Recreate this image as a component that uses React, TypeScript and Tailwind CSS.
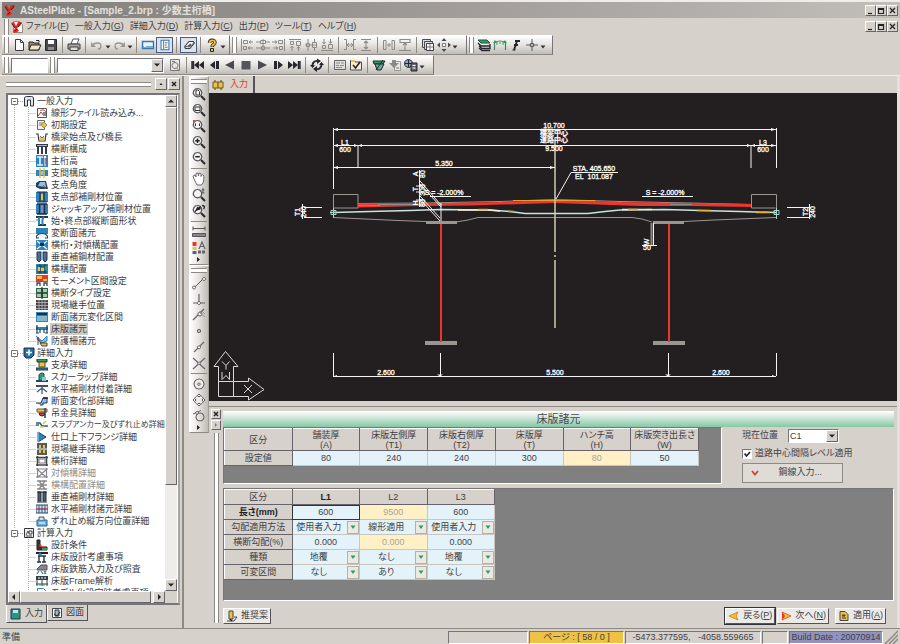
import { useState } from 'react'
import clsx from 'clsx'

// [path, fill, stroke, stroke width]
type Shape = [string, string, string?, number?]

const K = '#26262c'
const B = '#2f83bd'
const L = '#8cc4e6'
const Y = '#f0c23c'
const R = '#e23b2e'
const G = '#2f9e5a'
const D = '#8d8a86'
const N = 'none'

function Glyph({ shapes, size = 16, className }: { shapes: Shape[]; size?: number; className?: string }) {
  return (
    <svg viewBox={`0 0 ${size} ${size}`} width={size} height={size} className={clsx('shrink-0', className)} aria-hidden="true">
      {shapes.map(([d, fill, stroke, width], i) => (
        <path key={i} d={d} fill={fill} stroke={stroke ?? 'none'} strokeWidth={width ?? 1} />
      ))}
    </svg>
  )
}

/* ---------- toolbar glyphs (16 x 16) ---------- */
const lens: Shape[] = [
  ['M6.5 2.5a4.2 4.2 0 1 0 .01 0z', '#f4f4f2', '#55555a', 1.2],
  ['M10 10l4 4', N, K, 2],
]
const icons: Record<string, Shape[]> = {
  new: [['M4.5 2.5h5l3 3v8h-8z', '#fff', '#3c3c42'], ['M9.5 2.5v3h3', N, '#3c3c42']],
  open: [['M2 5h4l1 1h5v7H2z', '#9b8c62', K], ['M4 8h10l-2.500 5H2z', '#f1e6c0', K], ['M9 3.500h3v2', N, K]],
  save: [['M2.5 2.500h11v11h-11z', '#4a4a4e', K], ['M5 3h6v4H5z', '#fff'], ['M5 10h6v3H5z', '#8d8d90']],
  print: [['M5 7l2-5h6l-2 5z', '#fff', '#55555a'], ['M2 7h12v5H2z', '#a8a8a6', '#3e3e44'], ['M4 10h8v3.500H4z', '#dcdcda', '#3e3e44']],
  undo: [['M3 9c2-4 9-4 9 0c0 2-1 3-3 3', N, '#9a9894', 1.300], ['M2 5v5h5z', '#9a9894']],
  redo: [['M13 9c-2-4-9-4-9 0c0 2 1 3 3 3', N, '#9a9894', 1.300], ['M14 5v5H9z', '#9a9894']],
  bar: [['M2.500 4.500h11v7h-11z', '#e8f3fa', '#3278b4', 1.400], ['M3 9h10v2H3z', '#6eaedb'], ['M4 9.500h2', N, '#fff']],
  panel: [['M3.500 2.500h9v11h-9z', '#fff', '#3278b4', 1.200], ['M6.500 3v10M8 5.500h3M8 8h2M8 10.500h3', N, '#555']],
  eraser: [['M3 10l5-6h5l1 2-5 6H4z', '#fff', '#3e3e44', 1.200], ['M3 10h6l5-5', N, '#3e3e44'], ['M6 9a2 2 0 1 0 4-3z', '#55555a']],
  help: [['M5.500 6c0-3.500 5.500-3.500 5.500-.500c0 2-3 2-3 4.500', N, K, 3.400], ['M5.500 6c0-3.500 5.500-3.500 5.500-.500c0 2-3 2-3 4', N, Y, 1.800], ['M6.500 11.500h3v3h-3z', Y, K]],
  alignL: [['M2.500 2v12', N, D], ['M4.500 3.500h4v3h-4zM4.500 9.500h3v3h-3z', N, D], ['M10 5h4M9 11h5M12 3.500l-2 1.500 2 1.500M11 9.500L9 11l2 1.500', N, D]],
  alignC: [['M8 2v12', N, D], ['M5.500 3.500h5v3h-5zM6.500 9.500h3v3h-3z', N, D], ['M1 5h4M11 5h4M1 11h5M10 11h5', N, D]],
  alignR: [['M13.500 2v12', N, D], ['M7.500 3.500h4v3h-4zM8.500 9.500h3v3h-3z', N, D], ['M1 5h5M2 11h5M4 3.500L6 5 4 6.500M5 9.500L7 11l-2 1.500', N, D]],
  alignT: [['M2 2.500h12', N, D], ['M3.500 4.500h3v3h-3zM9.500 4.500h4v4h-4z', N, D], ['M5 9v5M11.500 10v4M3.500 11L5 9l1.500 2M10 11.500l1.500-2 1.500 2', N, D]],
  alignM: [['M2 8h12', N, D], ['M3.500 6.500h3v3h-3zM9.500 5.500h4v5h-4z', N, D], ['M5 2v4M11.500 2v3M5 10v4M11.500 11v3', N, D]],
  alignB: [['M2 13.500h12', N, D], ['M3.500 8.500h3v3h-3zM9.500 7.500h4v4h-4z', N, D], ['M5 2v5M11.500 2v4M3.500 5L5 7l1.500-2M10 4.500l1.500 2 1.500-2', N, D]],
  spanH: [['M2 2.500h2.500v10H2M14 2.500h-2.500v10H14M5 8h6M7 6L5 8l2 2M9 6l2 2-2 2', N, D]],
  spanV: [['M3 2.500h10M3 13.500h10M8 4v8M6 6l2-2 2 2M6 10l2 2 2-2', N, D, 1.100]],
  gapH: [['M2.500 3.500h2.500v9H2.500zM11 3.500h2.500v9H11z', N, D], ['M8 6v4M6 8h4', N, D]],
  gapV: [['M3 2.500h10v3H3zM2 13.500h12M8 6v7M6 8l2-2 2 2', N, D, 1.100]],
  copies: [['M2.500 2.500h8v8h-8z', '#ddd', '#4a4a4e'], ['M4.500 4.500h8v8h-8z', '#ddd', '#4a4a4e'], ['M6.500 6.500h7v7h-7z', '#fff', '#3e3e44'], ['M10 7v6M7 10h6', N, '#777']],
  move: [['M8 1l2.500 3h-5zM8 15l2.500-3h-5zM1 8l3-2.500v5zM15 8l-3-2.500v5z', '#4a4a4e'], ['M6.500 6.500h3v3h-3z', '#fff', '#777']],
  layers: [['M2 3h9l3 3H5z', '#2f9e6c', '#175a3c'], ['M2 6l3 3h9v-2M3 9l3 2.500h8v-2M3 11l3 2.500h8', N, K, 1.300]],
  frame: [['M2.500 13V5.500c3-2 8-2 11 0V13', N, '#4f8068', 1.200], ['M5 5v3M8 5v2M11 5v3', N, G], ['M1 6l2-3 2 3zM11 6l2-3 2 3z', G]],
  force: [['M6 13l3-9M7 4h5M6 8h4', N, K, 1.900], ['M4.500 13h3', N, K]],
  cross: [['M8 2v12M2 8h12', N, '#55555a'], ['M6.500 6.500h3v3h-3z', '#bbb', '#55555a']],
  sheet: [['M3.500 2.500h9v11h-9z', '#e8e6e2', '#77757a'], ['M8 5.500a3 3 0 1 0 .01 0z', N, '#77757a'], ['M5 4.500h3M9.500 11l2 2', N, '#77757a']],
  first: [['M2 4v8M3.500 4v8', N, K, 1.400], ['M9 4v8L4 8zM14 4v8L9 8z', K]],
  prev: [['M9 4v8L4 8z', K], ['M11.500 4v8', N, K, 3]],
  back: [['M12 3.500v9L3 8z', '#4a4a50']],
  stop: [['M3.500 4h9v8.500h-9z', '#55555c']],
  play: [['M4 3.500v9L13 8z', '#4a4a50']],
  next: [['M8 4v8l5-4z', K], ['M5.500 4v8', N, K, 3]],
  last: [['M14 4v8M12.500 4v8', N, K, 1.400], ['M2 4v8l5-4zM7 4v8l5-4z', K]],
  refresh: [['M4 10a4.300 4.300 0 0 1 5-6M12 6a4.300 4.300 0 0 1-5 6', N, K, 1.800], ['M8 1.500l4 2.500-4 3zM8 9v6l-4-3zM1 8h5L3.500 11zM15 8h-5l2.500-3z', K]],
  grid: [['M2.500 3.500h11v9h-11z', '#e0deda', '#66646a'], ['M4 6h4M9 6h3M4 8.500h3M8 8.500h4M4 10.500h6', N, '#8d8a90']],
  check: [['M2.500 3.500h4l1 1.500h6v8h-11z', '#f4eccc', '#4a4a50'], ['M5 8l2.500 3L12 5', N, K, 1.600], ['M3 3h4v2H3z', Y]],
  design: [['M2 4h12l-2 3H3z', '#2f9e6c', K], ['M4 7l2 6h4l3-6z', '#5fae94', K], ['M5 13l7-10', N, K]],
  report: [['M7.500 4.500h6v9h-6z', '#e8e6e2', '#999'], ['M2 6h3V3h4v3h3L7 11z', '#8d8a86'], ['M9 11h3', N, '#777']],
  world: [['M5.500 2.500a4 4 0 1 0 .01 0z', '#8fa9bd', K], ['M2 6.500h7M5.500 3v7', N, K], ['M8 6h6v8H8z', '#66646a', K], ['M9.500 8.500h3M9.500 11h3', N, '#fff']],
  zoomPage: [...lens, ['M5 4h2l1.500 1.500V9H5z', '#fff', '#333']],
  zoomWin: [...lens, ['M4 5h5v3.500H4z', N, '#333']],
  zoomFit: [...lens, ['M4.500 5.500v2.500M8.500 5.500v2.500', N, '#333'], ['M2 2l2.500 0L2 4.500z', R]],
  zoomIn: [...lens, ['M6.500 4.500v4.500M4.200 6.700h4.600', N, '#222', 1.500]],
  zoomOut: [...lens, ['M4.200 6.700h4.600', N, '#222', 1.500]],
  hand: [['M3 8L2 5l2-1 1 2V2.500l2-.500.500 3L8 2l2 .500v3l1.500-2L13 5l-.500 6-2 3H6z', '#fff', '#6a686c']],
  zoomDyn: [...lens, ['M12 1v5M10.500 3h3M10.500 6h3', N, '#55555a']],
  zoomPrev: [...lens, ['M4 9l3-5M5 7l4-1v-2zM11 2.500c3 0 3 2 1.500 3.500', N, '#222', 1.300]],
  measure: [['M2 4.500h12M2 2.500v4M14 2.500v4', N, '#55555a'], ['M1.500 9.500h13v3h-13z', '#88868a', '#55555a']],
  attrs: [['M1.500 2h4v4h-4z', R], ['M1.500 7h4v3h-4z', Y], ['M1.500 11h4v3h-4z', '#5060a8'], ['M8 9l3-7 3 7M9 6.500h4', N, '#66646a', 1.200], ['M7 10.500h3v3H7zM11 10.500h3v3h-3z', '#66646a']],
  snapEnd: [['M4 12l8-8', N, '#55555a'], ['M3 11a1.500 1.500 0 1 0 .01 0zM13 2.500a1.500 1.500 0 1 0 .01 0z', '#fff', '#55555a']],
  snapPerp: [['M2 12h12M8 3v9', N, '#66646a', 1.200], ['M8 10.500a1.500 1.500 0 1 0 .01 0z', '#fff', '#55555a']],
  snapTan: [['M2 13L13 2', N, '#66646a', 1.200], ['M9 5a2 2 0 1 0 .01 0z', '#fff', '#55555a'], ['M9 6l5 4M11 4l3 3', N, '#999']],
  snapPoint: [['M8 6.500a1.500 1.500 0 1 0 .01 0z', '#fff', '#55555a', 1.200]],
  snapMid: [['M3 13L13 3', N, '#66646a', 1.100], ['M8 6.800a1.500 1.500 0 1 0 .01 0z', '#fff', '#55555a']],
  snapX: [['M2 3l12 11M14 3L2 14', N, '#66646a', 1.200], ['M8 7a1.200 1.200 0 1 0 .01 0z', '#fff', '#66646a']],
  snapCen: [['M8 3a5 5 0 1 0 .01 0z', '#eceae6', '#66646a', 1.100], ['M8 7a1.200 1.200 0 1 0 .01 0z', N, '#55555a']],
  snapQuad: [['M8 3.500a4.500 4.500 0 1 0 .01 0z', '#eceae6', '#66646a'], ['M8 2l1.500 1.500L8 5 6.500 3.500zM8 11l1.500 1.500L8 14l-1.500-1.500zM2 8l1.500-1.500L5 8 3.500 9.500zM11 8l1.500-1.500L14 8l-1.500 1.500z', '#fff', '#55555a']],
  snapArc: [['M9 5a4 4 0 1 0 .01 0z', N, '#66646a', 1.100], ['M2 6L10 2.500', N, '#66646a'], ['M6 3.500a1.300 1.300 0 1 0 .01 0z', '#fff', '#55555a']],
}

/* ---------- tree glyphs (12 x 12) ---------- */
const treeIcons: Record<string, Shape[]> = {
  arch: [['M1.500 11V3a2 2 0 0 1 2-1.500h5a2 2 0 0 1 2 1.500v8h-3V5h-3v6z', '#dfe6ec', '#33333a']],
  star: [['M1 1h10v7l-3 3H3l-2-2z', '#2a6f9e', '#1d2c40'], ['M6 2.500v6M3 5.500h6', N, '#dff', 1.600]],
  doc: [['M1.500 1.500h9v9h-9z', '#eee', '#33333a'], ['M3 8l2-4 1 2M6 4h3v3H6zM3 9h6', N, '#44444c']],
  line: [['M1.500 1.500h9v9h-9z', '#fff', '#555'], ['M2 9l3-4 3 4M4 4c2-2 5-1 6 1', N, '#a03c2c'], ['M7 5h3v4H7z', '#889']],
  init: [['M1.500 1.500h7v9h-7z', '#f2f2f2', '#666'], ['M3 4h4M3 6h3', N, '#777'], ['M8 3l3 3-3 3-3-3z', Y, '#a08a4c']],
  girder: [['M0 3h2l1 7h6l1-7h2', N, '#33384a', 1.200], ['M3.500 9.500h5V6h-5z', Y], ['M4 5l2 2 2-2', N, '#66a']],
  cols: [['M0 1h12v3H0z', '#33384a'], ['M2 4v7M6 4v7M10 4v7', N, '#33384a', 2], ['M1 2.500h10', N, L]],
  height: [['M0 0h12v12H0z', B], ['M1 2h6M1 10h6M4 2v8', N, '#e4f0f8', 1.700], ['M9 1v10M8 3l1-2 1 2', N, '#fff'], ['M10 3v6', N, R]],
  span: [['M0 3h12v6H0z', B], ['M4 1v10M8 1v10', N, Y, 1.400], ['M5 4h2v4H5z', L]],
  angle: [['M0 8V4l3-2h7l2 8H4z', '#24405e'], ['M2 7l2-4h5l1 5z', L], ['M7 6l3 4', N, R]],
  stiff: [['M0 1h12v10H0z', B], ['M1 1h10M1 11h10M4 1v10M8 1v10', N, '#1d2c40', 1.200], ['M5 3h2v6H5z', Y]],
  jack: [['M0 1h12v10H0z', B], ['M1 1h10M1 11h10M3.500 1v10M8.500 1v10', N, '#1d2c40', 1.300], ['M5 2h2v8H5z', '#9080b8']],
  ends: [['M0 2h12M2 10h8', N, '#1d3c40', 2], ['M3 2v8M8 2c-2 2-2 5-1 8', N, B, 2], ['M0 5h2', N, G]],
  vary: [['M0 1h12v6H0z', B], ['M0 11c1-6 11-6 12 0M0 11h3M9 11h3', '#e8f4fa', '#26405a', 1.200]],
  brace: [['M0 1h12v10H0z', B], ['M1 2l10 8M11 2L1 10', N, '#e4f0f8', 1.400], ['M4 4h4v3H4z', '#17314c']],
  vstiff: [['M1 1h4v8l-2 2-2-2zM7 1h4v8l-2 2-2-2z', '#4d6c96', '#26304a'], ['M6 0v9', N, L]],
  lateral: [['M0 1h12v10H0z', B], ['M1 3h10M1 9h10M4 1v10M9 1v10', N, '#17404a'], ['M2 4h2v4H2zM5 5h3v3H5z', Y], ['M9 3h2v4H9z', G]],
  moment: [['M0 0h12v7H0z', R], ['M1 1h5v3H1z', Y], ['M7 4h4v2H7z', Y], ['M1 11V8h3v3M8 11V8h3v3', N, '#345', 1.300]],
  type: [['M0 1h12v10H0z', '#35604e'], ['M1 2h4v3H1zM1 7h4v3H1zM7 2h4v3H7zM7 7h4v3H7z', '#9fd0a4'], ['M6 0v12', N, K]],
  joint: [['M0 1h12v10H0z', '#44444c'], ['M0 3.500h12M0 6.500h12M0 9.500h12M3 1v10M6 1v10M9 1v10', N, '#c6c6cc', 0.700]],
  section: [['M0 1h12v10H0z', B], ['M1 2h10v2H1z', '#17314c'], ['M2 5v5M4 5v5M6 5v5M8 5v5M10 5v5', N, '#d8f0dc']],
  slab: [['M0 3l2 1h8l2-1v4H0z', B], ['M1 2v8M11 2v8M4 6v4M8 6v4M0 10h3M9 10h3', N, '#234064', 1.200]],
  rail: [['M0 1l6 5 5-5v5L6 8z', '#7ec0e4', B], ['M1 3l4 5', N, R, 1.500], ['M4 8h7v3H6z', Y, '#345'], ['M2 2v8', N, '#246']],
  bearing: [['M1 0h10v3H1z', G, '#234'], ['M3 3h6v5H3z', Y, '#543'], ['M0 9h12v2H0z', B, '#234']],
  scallop: [['M3 10V4a3 3 0 0 1 5-1v7z', G, '#246'], ['M0 10h12', N, '#246', 2], ['M6 6h4v4H6z', L]],
  hstiff: [['M0 3h12', N, '#33384a', 1.800], ['M6 3v8M6 5l-5 4M6 5l5 4', N, '#445a78', 1.300]],
  change: [['M0 8h5l2-5h4v5H7v2H4', L, '#26304a'], ['M7 3h5', N, '#222', 1.500]],
  hanger: [['M1 2h10v3H1z', Y, '#654'], ['M3 6a3 3 0 1 0 6 0z', R, '#422'], ['M9 1v10', N, '#246', 1.500]],
  anchor: [['M0 4h4l2 3h6M0 6h3', N, '#26608a', 1.600], ['M7 5l3-3M4 8h4', N, Y, 1.500]],
  flange: [['M2 1l8 5-8 5z', B, '#26405a'], ['M2 1v10', N, '#7ec0e4', 1.500]],
  fieldj: [['M1 0h10v12H1z', '#555a60'], ['M3 2h2v3H3zM7 2h2v3H7zM3 7h2v3H3zM7 7h2v3H7z', Y], ['M1 6h10', N, '#fff']],
  cross: [['M1.500 1v10M10.500 1v10M0 2.500h12M0 10h12', N, '#44444c', 1.600], ['M3 4h6v4H3z', '#fff', '#777']],
  sway: [['M1.500 1v10M10.500 1v10M0 2h12M0 10h12M2 3l8 7M10 3l-8 7', N, '#88868a', 1.200]],
  lat2: [['M1 2h10M1 6h10M1 10h10M3 2l6 8M9 2L3 10', N, '#88868a', 1.300]],
  pillars: [['M2 1h3v9H2zM7 1h3v9H7z', '#4a5a70', '#26303c'], ['M1 1h10M1 11h10', N, '#222']],
  hs2: [['M0 2h12v8H0z', '#c8e4f4', '#26405a'], ['M0 6h12', N, R, 1.600], ['M3 2v8M6 2v8M9 2v8', N, '#26608a']],
  stud: [['M1 5h10v6H1z', '#6ab2e0', '#26608a'], ['M3 5V2h5v3', '#cde', '#555'], ['M3 8h6', N, '#fff']],
  cond: [['M1 1h3v7h7v3H1z', '#33333a', '#222'], ['M4 8V5l2 3h4', R, R], ['M6 9h5v2H6z', G]],
  consider: [['M0 2h12', N, '#222', 2], ['M2 5h8M3 5v6M8 5v6M1 11h4M6 11h4', N, '#26303c', 1.400], ['M2 4l2-3 2 3z', B]],
  rebar: [['M1 6l4-4h6v5H1z', '#88868a', '#555'], ['M3 8l-2 3M5 8l2 3M8 8l2 3M10 8l-2 3', N, B, 1.200]],
  frame: [['M0 1h12v4H0z', '#33404a'], ['M2 3h2M5 3h2M8 3h2', N, '#fff'], ['M1 5v6M6 5v6M11 5v6M0 9h12', N, '#33404a'], ['M3 10h2M7 10h2', N, G]],
  model: [['M1.500 1.500h6l3 3v7h-9z', '#fff', B], ['M4 8l3-4 2 5', N, B]],
}

const tree = [
  {
    icon: 'arch',
    label: '一般入力',
    items: [
      ['line', '線形ファイル読み込み...'],
      ['init', '初期設定'],
      ['girder', '橋梁始点及び橋長'],
      ['cols', '横断構成'],
      ['height', '主桁高'],
      ['span', '支間構成'],
      ['angle', '支点角度'],
      ['stiff', '支点部補剛材位置'],
      ['jack', 'ジャッキアップ補剛材位置'],
      ['ends', '始・終点部縦断面形状'],
      ['vary', '変断面諸元'],
      ['brace', '横桁・対傾構配置'],
      ['vstiff', '垂直補鋼材配置'],
      ['lateral', '横構配置'],
      ['moment', 'モーメント区間設定'],
      ['type', '横断タイプ設定'],
      ['joint', '現場継手位置'],
      ['section', '断面諸元変化区間'],
      ['slab', '床版諸元'],
      ['rail', '防護柵諸元'],
    ],
  },
  {
    icon: 'star',
    label: '詳細入力',
    items: [
      ['bearing', '支承詳細'],
      ['scallop', 'スカーラップ詳細'],
      ['hstiff', '水平補剛材付着詳細'],
      ['change', '断面変化部詳細'],
      ['hanger', '吊金具詳細'],
      ['anchor', 'スラブアンカー及びずれ止め詳細'],
      ['flange', '仕口上下フランジ詳細'],
      ['fieldj', '現場継手詳細'],
      ['cross', '横桁詳細'],
      ['sway', '対傾構詳細'],
      ['lat2', '横構配置詳細'],
      ['pillars', '垂直補剛材詳細'],
      ['hs2', '水平補剛材諸元詳細'],
      ['stud', 'ずれ止め縦方向位置詳細'],
    ],
  },
  {
    icon: 'doc',
    label: '計算入力',
    items: [
      ['cond', '設計条件'],
      ['consider', '床版設計考慮事項'],
      ['rebar', '床版鉄筋入力及び照査'],
      ['frame', '床版Frame解析'],
      ['model', 'モデル化設定時考慮事項'],
    ],
  },
]
const disabledItems = ['対傾構詳細', '横構配置詳細']

const raised = 'border border-t-white border-l-white border-r-[#66646a] border-b-[#66646a] bg-[#d6d1ca]'
const sunken = 'border border-t-[#77757a] border-l-[#77757a] border-r-white border-b-white'

function Grip({ vertical = false }: { vertical?: boolean }) {
  return vertical ? (
    <span className="mx-auto my-[2px] block h-[5px] w-4 shrink-0 border-y border-[#8d8a86] bg-white" />
  ) : (
    <span className="mx-[2px] block h-4 w-[5px] shrink-0 self-center border-x border-[#8d8a86] bg-white" />
  )
}

const Sep = () => <span className="mx-[3px] h-4 w-px shrink-0 self-center bg-[#8d8a86]" />

function Caret() {
  return (
    <svg viewBox="0 0 6 6" width="6" height="6" className="mt-1 shrink-0" aria-hidden="true">
      <path d="M0.500 1.500h5L3 4.500z" fill="#33333a" />
    </svg>
  )
}

// "|" is a separator, "v" a drop-down caret, "*" marks a pressed button
function Tools({ names }: { names: string[] }) {
  return (
    <>
      {names.map((n, i) => {
        if (n === '|') return <Sep key={i} />
        if (n === 'v') return <Caret key={i} />
        const pressed = n.endsWith('*')
        const name = n.replace('*', '')
        return (
          <button
            key={i}
            aria-label={name}
            className={clsx('flex h-4 shrink-0 items-center justify-center', pressed ? 'w-[17px] border border-[#4b5b80] bg-[#dde3ea]' : 'w-4')}
          >
            <Glyph shapes={icons[name]} className={pressed ? 'size-[14px]' : undefined} />
          </button>
        )
      })}
    </>
  )
}

const bandClass = 'flex h-5 shrink-0 items-center border-t border-r border-b border-t-white border-r-[#77757a] border-b-[#8d8a86] bg-linear-to-b from-white via-[#e6e3df] to-[#bfbbb6]'

function WindowButtons() {
  const marks = ['M2 7.500h4', 'M1.500 2.500h5v5h-5zM1.500 3.500h5', 'M2 2l5 5M7 2L2 7']
  return (
    <div className="ml-auto flex shrink-0">
      {['最小化', '元に戻す', '閉じる'].map((label, i) => (
        <button key={label} aria-label={label} className={clsx('flex h-[11px] w-[11px] items-center justify-center', raised)}>
          <svg viewBox="0 0 9 9" width="9" height="9" aria-hidden="true">
            <path d={marks[i]} fill="none" stroke="#222" strokeWidth="1.200" />
          </svg>
        </button>
      ))}
    </div>
  )
}

function AppMark({ page = false }: { page?: boolean }) {
  return (
    <svg viewBox="0 0 12 12" width="12" height="12" className="shrink-0" aria-hidden="true">
      {page && <path d="M2.500 0.500h6l3 3v8h-9z" fill="#fff" stroke="#8d8a86" />}
      <path d="M0 2l3-1 2 4 2-4h4l-2 4-3 2 2 3-4 2-2-1 2-4z" fill="#dc2a22" />
      <path d="M1 3l3 4M7 6l3-4M4 10l2-2" stroke="#5a1414" />
    </svg>
  )
}

const menus = [
  ['ファイル', 'F'],
  ['一般入力', 'G'],
  ['詳細入力', 'D'],
  ['計算入力', 'C'],
  ['出力', 'P'],
  ['ツール', 'T'],
  ['ヘルプ', 'H'],
]

function ArrowButton({ path, label, className }: { path: string; label: string; className?: string }) {
  return (
    <button aria-label={label} className={clsx('flex size-3 shrink-0 items-center justify-center', raised, className)}>
      <svg viewBox="0 0 8 8" width="8" height="8" aria-hidden="true">
        <path d={path} fill="#222" />
      </svg>
    </button>
  )
}

function TreeItem({ icon, label, last, lastGroup, selected, onSelect }: {
  icon: string
  label: string
  last: boolean
  lastGroup: boolean
  selected: boolean
  onSelect: () => void
}) {
  return (
    <li className="flex h-3 items-center whitespace-nowrap">
      <svg viewBox="0 0 27 12" width="27" height="12" className="shrink-0" aria-hidden="true">
        <path
          d={`${lastGroup ? '' : 'M5.500 0v12'}M19.500 0v${last ? 6 : 12}M19.500 6.500h8`}
          stroke="#aaa8a4"
          strokeDasharray="1 1"
        />
      </svg>
      <Glyph shapes={treeIcons[icon]} size={12} />
      <button
        onClick={onSelect}
        className={clsx(
          'ml-[2px] h-3 px-px leading-3',
          selected && 'bg-[#d0ccc5]',
          disabledItems.includes(label) && 'text-[#8d8a86]',
          label.length > 14 && 'text-[8px]',
        )}
      >
        {label}
      </button>
    </li>
  )
}

function Sidebar() {
  const [selected, setSelected] = useState('床版諸元')
  return (
    <aside className="flex w-[182px] shrink-0 flex-col pr-[2px] pl-[6px]">
      <div className="flex h-[17px] shrink-0 items-center gap-px pb-px">
        <span className="h-[5px] flex-1 border-y border-[#8d8a86] bg-white" />
        <ArrowButton label="折りたたむ" path="M4 3l1.500 2h-3z" className="ml-[3px]" />
        <button aria-label="閉じる" className={clsx('flex size-3 items-center justify-center', raised)}>
          <svg viewBox="0 0 8 8" width="8" height="8" aria-hidden="true">
            <path d="M2 2l4 4M6 2L2 6" stroke="#222" strokeWidth="1.400" />
          </svg>
        </button>
      </div>
      <div className="flex min-h-0 flex-1 border-2 border-[#77757a] border-r-[#a8a49f] bg-white pr-px">
        <div className="flex min-w-0 flex-1 flex-col">
          <ul className="min-h-0 flex-1 overflow-hidden pl-px text-[#3c3c44]">
            {tree.map((group, g) => (
              <li key={group.label}>
                <div className="flex h-3 items-center whitespace-nowrap">
                  <svg viewBox="0 0 14 12" width="14" height="12" className="shrink-0" aria-hidden="true">
                    <path d={`${g === 0 ? '' : 'M5.500 0v2'}M5.500 10v2M9 6.500h5`} stroke="#aaa8a4" strokeDasharray="1 1" />
                    <path d="M2.500 3.500h6v6h-6zM4 6.500h3" fill="white" stroke="#77757a" />
                  </svg>
                  <Glyph shapes={treeIcons[group.icon]} size={12} />
                  <span className="ml-[2px] leading-3">{group.label}</span>
                </div>
                <ul>
                  {group.items.map(([icon, label], i) => (
                    <TreeItem
                      key={label}
                      icon={icon}
                      label={label}
                      last={i === group.items.length - 1 && g < 2}
                      lastGroup={g === 2}
                      selected={selected === label}
                      onSelect={() => setSelected(label)}
                    />
                  ))}
                </ul>
              </li>
            ))}
          </ul>
          <div className="flex h-3 shrink-0 bg-[#ece9e5]">
            <ArrowButton label="左へ" path="M5 1v6L2 4z" />
            <span className={clsx('flex-1', raised)} />
            <span className="w-[2px]" />
            <ArrowButton label="右へ" path="M3 1v6l3-3z" />
          </div>
        </div>
        <div className="flex w-3 shrink-0 flex-col bg-[#efedea]">
          <ArrowButton label="上へ" path="M1 5.500h6L4 2.500z" />
          <span className={clsx('flex-4', raised)} />
          <span className="flex-1" />
          <ArrowButton label="下へ" path="M1 2.500h6L4 5.500z" />
          <span className="h-3 bg-[#d6d1ca]" />
        </div>
      </div>
      <div className="flex shrink-0 items-start pb-[5px]">
        <button className="flex h-[18px] items-center gap-[3px] border border-t-0 border-l-white border-r-[#55535a] border-b-[#55535a] px-[3px]">
          <Glyph shapes={[['M1 1h9v10H1z', '#2f8f96', '#17404a'], ['M3 2h5v3H3z', '#bfe6e0'], ['M4 9l4-4 2 1-3 4z', G]]} size={12} />
          入力
        </button>
        <button className="flex h-4 items-center gap-[3px] border border-t-0 border-l-white border-r-[#55535a] border-b-[#55535a] px-[3px]">
          <Glyph shapes={[['M1.500 1.500h9v9h-9z', '#fff', '#44444c'], ['M4 3h4v6H4z', '#9bb', '#335'], ['M3 7l3 2 3-4', N, '#222']]} size={12} />
          図面
        </button>
      </div>
    </aside>
  )
}

const HSep = () => <span className="mx-auto my-[2px] h-px w-4 shrink-0 bg-[#8d8a86]" />

function SideTools() {
  const group = (names: string[]) => (
    <div className="flex flex-col items-center border border-t-white border-l-white border-r-[#a09d98] border-b-[#8d8a86] bg-linear-to-r from-white via-[#e6e3df] to-[#bfbbb6]">
      <Grip vertical />
      {names.map((n, i) =>
        n === '|' ? (
          <HSep key={i} />
        ) : (
          <button key={i} aria-label={n} className="h-4 w-4">
            <Glyph shapes={icons[n]} />
          </button>
        ),
      )}
      <svg viewBox="0 0 8 8" width="8" height="8" aria-hidden="true">
        <path d="M2 1v5l3-2.500z" fill="#222" />
      </svg>
    </div>
  )
  return (
    <div className="w-[27px] shrink-0 border-l-2 border-[#8d8a86] pl-[5px]">
      {group(['zoomPage', 'zoomWin', 'zoomFit', 'zoomIn', 'zoomOut', '|', 'hand', 'zoomDyn', 'zoomPrev', '|', 'measure', 'attrs'])}
      {group(['snapEnd', 'snapPerp', 'snapTan', 'snapPoint', 'snapMid', 'snapX', '|', 'snapCen', 'snapQuad', 'snapArc'])}
    </div>
  )
}

function Drawing() {
  return (
    <svg viewBox="209 93 688 308" preserveAspectRatio="xMinYMin meet" className="min-h-0 w-full flex-1 bg-[#231f20]" role="img" aria-label="床版断面図">
      {/* slab outline */}
      <g fill="none" stroke="#9a9692">
        <path d="M333.500 217V194.500h24.500V208h-24M776.500 217V194.500H751.500V208h24" />
        <path d="M358 203.500L425 203 500 201.500 555 199.500 620 201.500 690 203 751 204.500" />
        <path d="M333 217.500l65 3 28 1M456 222l12-2 10-2.500h154l10 1.500 10 3M684 221.500l30-1.500 62-2.500" />
      </g>
      <path d="M358 203.500L440 203 500 202 555 199.500 620 202 690 203 751 204V207L690 206 640 206 555 203 470 205.500 420 206 358 207.500z" fill="#ee352e" />
      <path d="M358 205.500h22M378 204.500h40M670 204.500h22" stroke="#8d8a86" />
      <path d="M513 200.500h82" stroke="#e0a030" />
      <path d="M333 212.500L370 211.500 410 210.500 440 209.500 490 210 510 211.500 525 213.500H588L605 211.500 620 210 665 209.500 700 210.500 740 211.500 776 212.500" fill="none" stroke="#c5e5df" strokeWidth="1.500" />
      <path d="M458 210h30l12 1M622 209.500h30" fill="none" stroke="#f7ecd0" strokeWidth="1.500" />
      <path d="M478 209.500h10M508 211.500h6M697 210.500h14M756 212.500h14M628 209.500h10" stroke="#e4ae3a" strokeWidth="1.500" />
      <path d="M333.500 208v10M330 212.500h7M331 210.500h5v4h-5zM774 210.500h5v4h-5zM776.500 208v11" fill="none" stroke="#aad8ce" />

      {/* girders */}
      <g fill="#9a9692">
        <rect x="426" y="221" width="31" height="3" />
        <rect x="653" y="221" width="31" height="3" />
        <rect x="425" y="341" width="32" height="4" />
        <rect x="653" y="341" width="32" height="4" />
      </g>
      <path d="M441 224v118M669 224v118" stroke="#ee352e" strokeWidth="2" />

      {/* centre line */}
      <path d="M555 140v188" stroke="#cfc9ae" strokeWidth="1.500" strokeDasharray="112 3 2 3" />

      {/* dimensions */}
      <g fill="none" stroke="#f4f4f4">
        <path d="M333.500 128v61M776.500 128v40M333 129.500h443M333 145.500h443M358 145v23M751 145v23M333 167.500h222" />
        <path d="M571 172.500h47M571 172.500L556 199M430 196.500h41M642 196.500h51M441 203v18" />
        <path d="M419.500 170v37M420 181l21 24M420 184l21 23M420 196l20 22M420 199l20 22M416 186h7M416 192h7M416 200h7" />
        <path d="M304 207.500h18M304 217.500h18M302.500 204v15M787 207.500h22M787 217.500h22M809.500 204v15" />
        <path d="M333.500 353v23M440.500 353v23M668.500 353v23M776.500 353v23M333 376.500h443" />
        <path d="M642 245.500h15M653.500 223v22" />
      </g>
      <path d="M651.500 223v22" stroke="#8d8a86" strokeWidth="2" />
      <path d="M333 129.500l5-1.500v3zM776 129.500l-5-1.500v3zM333 145.500l5-1.500v3zM776 145.500l-5-1.500v3zM358 145.500l-4-1.500v3zM358 145.500l4-1.500v3zM751 145.500l-4-1.500v3zM751 145.500l4-1.500v3zM333 167.500l5-1.500v3zM555 167.500l-5-1.500v3zM333 376.500l4-1.500v2zM440 376.500l-3-2h6zM668 376.500l-3-2h6zM776 376.500l-4-1.500v2z" fill="#f4f4f4" />
      <g fill="#fff" stroke="#fff" strokeWidth="0.300" fontSize="7" textAnchor="middle">
        <text x="554" y="128">10.700</text>
        <text x="554" y="135">橋梁中心</text>
        <text x="554" y="142">道路中心</text>
        <text x="554" y="151">9.500</text>
        <text x="345" y="145">L1</text>
        <text x="345" y="152">600</text>
        <text x="763" y="145">L3</text>
        <text x="763" y="152">600</text>
        <text x="444" y="166">5.350</text>
        <text x="594" y="171">STA. 405.650</text>
        <text x="594" y="179">EL&#160; 101.087</text>
        <text x="444" y="195">S = -2.000%</text>
        <text x="665" y="195">S = -2.000%</text>
        <text x="386" y="375">2.600</text>
        <text x="555" y="375">5.500</text>
        <text x="721" y="375">2.600</text>
        <text transform="translate(300 212) rotate(-90)">T1</text>
        <text transform="translate(306 212) rotate(-90)">240</text>
        <text transform="translate(808 212) rotate(-90)">T2</text>
        <text transform="translate(815 212) rotate(-90)">240</text>
        <text transform="translate(418 174) rotate(-90)">A</text>
        <text transform="translate(425 174) rotate(-90)">80</text>
        <text transform="translate(418 189) rotate(-90)">T</text>
        <text transform="translate(425 190) rotate(-90)">300</text>
        <text transform="translate(418 203) rotate(-90)">H</text>
        <text transform="translate(425 203) rotate(-90)">80</text>
        <text transform="translate(649 242) rotate(-90)">W</text>
        <text x="647" y="250">50</text>
      </g>

      {/* axis marker */}
      <path d="M225.500 351.500L238 366.500h-4.500V381.500H248.500V378L264 389.500 248.500 400V396.500H218.500V366.500H214zM218.500 381.500h15v15" fill="none" stroke="#d8d8d8" />
      <path d="M222 361.500l4 4 3.500-4M226 365.500v4M222 372v7.500l4-4 3.500 4V372M244 385l8 8M252 385l-8 8" fill="none" stroke="#d8d8d8" />
    </svg>
  )
}

const headCell = 'border border-t-white border-l-white border-r-[#66646a] border-b-[#66646a] bg-[#d6d1ca] p-0'
const blueCell = 'border-r border-b border-[#c9c5bf] bg-[#e4f3f9] p-0'
const yellowCell = 'border-r border-b border-[#c9c5bf] bg-[#fff0c6] p-0'

const thickness = [
  ['舗装厚', 'A', '80'],
  ['床版左側厚', 'T1', '240'],
  ['床版右側厚', 'T2', '240'],
  ['床版厚', 'T', '300'],
  ['ハンチ高', 'H', '80'],
  ['床版突き出長さ', 'W', '50'],
]

function ThicknessTable() {
  return (
    <table className="w-[475px] table-fixed border-collapse text-center leading-[10px]">
      <thead>
        <tr className="h-[22px]">
          <th scope="col" className={clsx(headCell, 'font-normal')}>区分</th>
          {thickness.map(([name, code]) => (
            <th key={code} scope="col" className={clsx(headCell, 'font-normal')}>
              <span className="block whitespace-nowrap">{name}</span>
              <span className="block">({code})</span>
            </th>
          ))}
        </tr>
      </thead>
      <tbody>
        <tr className="h-[15px]">
          <th scope="row" className={clsx(headCell, 'font-normal')}>設定値</th>
          {thickness.map(([name, code, value]) => (
            <td key={code} className={code === 'H' ? yellowCell : blueCell}>
              <input
                aria-label={name}
                defaultValue={value}
                disabled={code === 'H'}
                className="block h-[13px] w-full bg-transparent text-center outline-none disabled:text-[#a8a49a]"
              />
            </td>
          ))}
        </tr>
      </tbody>
    </table>
  )
}

const sections = ['L1', 'L2', 'L3']
const sectionRows: { label: string; values: string[]; options?: string[] }[] = [
  { label: '長さ(mm)', values: ['600', '9500', '600'] },
  { label: '勾配適用方法', values: ['使用者入力', '線形適用', '使用者入力'], options: ['使用者入力', '線形適用'] },
  { label: '横断勾配(%)', values: ['0.000', '0.000', '0.000'] },
  { label: '種類', values: ['地覆', 'なし', '地覆'], options: ['地覆', 'なし'] },
  { label: '可変区間', values: ['なし', 'あり', 'なし'], options: ['なし', 'あり'] },
]

function SectionTable() {
  return (
    <table className="w-[271px] table-fixed border-collapse text-center leading-[10px]">
      <thead>
        <tr className="h-[15px]">
          <th scope="col" className={clsx(headCell, 'font-normal')}>区分</th>
          {sections.map((s) => (
            <th key={s} scope="col" className={clsx(headCell, s === 'L1' ? 'font-bold text-[#222]' : 'font-normal')}>{s}</th>
          ))}
        </tr>
      </thead>
      <tbody>
        {sectionRows.map((row, r) => (
          <tr key={row.label} className="h-[15px]">
            <th scope="row" className={clsx(headCell, 'whitespace-nowrap', r === 0 ? 'font-bold text-[#222]' : 'font-normal')}>{row.label}</th>
            {row.values.map((value, c) => {
              const locked = c === 1 && !row.options
              const active = r === 0 && c === 0
              return (
                <td key={c} className={clsx(locked ? yellowCell : blueCell, active && 'outline outline-1 -outline-offset-1 outline-[#33333a]')}>
                  {row.options ? (
                    <div className="relative">
                      <select
                        aria-label={`${sections[c]} ${row.label}`}
                        defaultValue={value}
                        className="block h-[13px] w-full appearance-none bg-transparent pr-[14px] text-center [text-align-last:center] outline-none"
                      >
                        {row.options.map((o) => (
                          <option key={o}>{o}</option>
                        ))}
                      </select>
                      <span className="pointer-events-none absolute top-0 right-0 flex h-[13px] w-3 items-center justify-center border border-[#b4b0aa] bg-[#ebe9e2]">
                        <svg viewBox="0 0 6 6" width="6" height="6" aria-hidden="true">
                          <path d="M0.500 1.500h5L3 5z" fill="#25a05c" />
                        </svg>
                      </span>
                    </div>
                  ) : (
                    <input
                      aria-label={`${sections[c]} ${row.label}`}
                      defaultValue={value}
                      disabled={locked}
                      className="block h-[13px] w-full bg-transparent text-center outline-none disabled:text-[#a8a49a]"
                    />
                  )}
                </td>
              )
            })}
          </tr>
        ))}
      </tbody>
    </table>
  )
}

const actionButton = 'flex h-4 items-center gap-[3px] whitespace-nowrap border border-t-white border-l-white border-r-[#55535a] border-b-[#55535a] bg-[#eceae6] px-[2px]'

function SlabPanel() {
  return (
    <section className="mt-[5px] flex shrink-0 border-t border-[#8d8a86] pr-[3px]">
      <div className="flex w-[14px] shrink-0 flex-col items-center gap-px pt-[2px]">
        <button aria-label="閉じる" className={clsx('flex size-[10px] items-center justify-center', raised)}>
          <svg viewBox="0 0 8 8" width="8" height="8" aria-hidden="true">
            <path d="M2 2l4 4M6 2L2 6" stroke="#222" strokeWidth="1.400" />
          </svg>
        </button>
        <button aria-label="展開" className={clsx('flex size-[10px] items-center justify-center', raised)}>
          <svg viewBox="0 0 8 8" width="8" height="8" aria-hidden="true">
            <path d="M3 2v4l2-2z" fill="#77757a" />
          </svg>
        </button>
        <span className="mt-[2px] mb-[5px] w-[5px] flex-1 border-x border-[#8d8a86] bg-white" />
      </div>
      <div className="min-w-0 flex-1">
        <h2 className="mt-1 h-4 bg-linear-to-b from-white via-[#c4e3d3] to-[#86c8a2] text-center text-[11px] leading-4 text-[#4a4a50]">床版諸元</h2>
        <div className="flex">
          <div className={clsx('h-[57px] min-w-0 flex-1 overflow-hidden bg-[#808080]', sunken)}>
            <ThicknessTable />
          </div>
          <div className="w-[172px] shrink-0 pt-[2px] pl-5">
            <div className="flex items-center">
              <label htmlFor="position" className="w-[46px]">現在位置</label>
              <div className={clsx('relative w-[51px] bg-white', sunken)}>
                <select id="position" className="block h-3 w-full appearance-none pl-px leading-3 outline-none">
                  <option>C1</option>
                  <option>C2</option>
                </select>
                <span className={clsx('pointer-events-none absolute top-0 right-0 flex h-3 w-3 items-center justify-center', raised)}>
                  <svg viewBox="0 0 8 8" width="8" height="8" aria-hidden="true">
                    <path d="M1 2.500h6L4 5.500z" fill="#222" />
                  </svg>
                </span>
              </div>
            </div>
            <label className="mt-[5px] flex h-3 items-center gap-[3px] whitespace-nowrap">
              <span className="relative size-[10px]">
                <input type="checkbox" defaultChecked className={clsx('peer block size-[10px] appearance-none bg-white', sunken)} />
                <svg viewBox="0 0 10 10" className="pointer-events-none absolute inset-0 hidden size-[10px] peer-checked:block" aria-hidden="true">
                  <path d="M2.500 4.500l2 2.500 3.500-4" fill="none" stroke="#222" strokeWidth="1.600" />
                </svg>
              </span>
              道路中心間隔レベル適用
            </label>
            <button className="mt-[3px] flex h-5 w-[101px] items-center border border-[#8d8a86] bg-[#dfdcd8] pr-5 pl-2">
              <svg viewBox="0 0 8 8" width="8" height="8" aria-hidden="true">
                <path d="M1 2l3 3.500L7 2" fill="none" stroke="#e03a2c" strokeWidth="1.800" />
              </svg>
              <span className="flex-1 text-right">鋼線入力...</span>
            </button>
          </div>
        </div>
        <div className={clsx('mt-1 h-[113px] overflow-hidden bg-[#808080]', sunken)}>
          <SectionTable />
        </div>
        <div className="mt-[7px] mb-1 flex pr-2">
          <button className={actionButton}>
            <Glyph shapes={[['M3 1h4v8H3z', Y, '#44444c'], ['M1 11h7l3-4H8', N, '#44444c'], ['M4 9l2 2', N, '#222', 1.500]]} size={12} />
            推奨案
          </button>
          <button className={clsx(actionButton, 'ml-auto outline outline-1 outline-[#33333a]')}>
            <Glyph shapes={[['M1 6l9-4-2 4 2 4z', Y, '#d08a20']]} size={12} />
            <span>戻る(<u>P</u>)</span>
          </button>
          <button className={clsx(actionButton, 'ml-[2px]')}>
            <Glyph shapes={[['M11 6L2 2l2 4-2 4z', Y, '#e0651e'], ['M2 2l3 4-3 4z', R]]} size={12} />
            <span>次へ(<u>N</u>)</span>
          </button>
          <button className={clsx(actionButton, 'ml-[6px]')}>
            <Glyph shapes={[['M2 1.500h5l3 3v6H2z', Y, '#44444c'], ['M4 5h3v1H4M4 8h4', N, '#33333a']]} size={12} />
            <span>適用(<u>A</u>)</span>
          </button>
        </div>
      </div>
    </section>
  )
}

function StatusBar() {
  return (
    <footer className="flex h-4 shrink-0 items-center gap-px border-t border-[#8d8a86] px-[2px] pt-px leading-[11px]">
      <span className="flex-1">準備</span>
      <span className={clsx('h-[13px] w-20', sunken)} />
      <span className={clsx('h-[13px] w-[95px] bg-[#f0c243] text-center', sunken)}>ページ : [ 58 / 0 ]</span>
      <span className={clsx('h-[13px] w-[136px] text-center whitespace-nowrap', sunken)}>-5473.377595,&nbsp;&nbsp; -4058.559665</span>
      <span className={clsx('h-[13px] w-[26px]', sunken)} />
      <span className={clsx('h-[13px] w-[94px] bg-[#9293bd] text-center whitespace-nowrap', sunken)}>Build Date : 20070914</span>
      <svg viewBox="0 0 14 14" width="14" height="14" className="shrink-0" aria-hidden="true">
        <path d="M1 14L14 1M5 14l9-9M9 14l5-5" stroke="#8d8a86" strokeWidth="1.500" />
      </svg>
    </footer>
  )
}

export default function App() {
  return (
    <div className="flex h-screen flex-col overflow-hidden border-t-2 border-[#efede9] bg-[#d6d1ca] font-['Liberation_Sans','Noto_Sans_CJK_JP',sans-serif] text-[9px] text-[#3f3f47] [font-feature-settings:'palt']">
      <header className="shrink-0 pl-[2px]">
        <div className="flex h-4 items-center gap-1 bg-linear-to-r from-[#807e7c] via-[#a19c99] to-[#c2beba] px-[2px]">
          <AppMark />
          <h1 className="text-[10px] font-bold whitespace-nowrap text-[#e4e1dd]">ASteelPlate - [Sample_2.brp : 少数主桁橋]</h1>
          <WindowButtons />
        </div>
        <div className="flex h-[17px] items-center pr-[2px]">
          <Grip />
          <AppMark page />
          <nav className="ml-[3px] flex gap-[6px]">
            {menus.map(([name, key]) => (
              <button key={key} className="whitespace-nowrap">
                {name}(<u>{key}</u>)
              </button>
            ))}
          </nav>
          <WindowButtons />
        </div>
        <div className="flex">
          <div className={clsx(bandClass, 'pr-[3px]')}>
            <Grip />
            <Tools names={['new', 'open', 'save', '|', 'print', '|', 'undo', 'v', 'redo', 'v', '|', 'bar', 'panel*', '|', 'eraser*', '|', 'help', 'v']} />
          </div>
          <div className={clsx(bandClass, 'pr-2')}>
            <Grip />
            <Tools names={['alignL', 'alignC', 'alignR', 'alignT', 'alignM', 'alignB', '|', 'spanH', 'spanV', '|', 'gapH', 'gapV', '|', 'copies', 'move', 'v']} />
          </div>
          <div className={clsx(bandClass, 'pr-[6px]')}>
            <Grip />
            <Tools names={['layers', 'frame', 'force', 'cross', 'v']} />
          </div>
        </div>
        <div className="flex">
          <div className={bandClass}>
            <Grip />
            <input aria-label="番号" className={clsx('h-[15px] w-[37px] bg-white outline-none', sunken)} />
            <Grip />
            <div className={clsx('relative w-[107px] bg-white', sunken)}>
              <select aria-label="表示項目" className="block h-[13px] w-full appearance-none outline-none">
                <option></option>
              </select>
              <span className={clsx('pointer-events-none absolute top-0 right-0 flex h-[13px] w-3 items-center justify-center', raised)}>
                <svg viewBox="0 0 8 8" width="8" height="8" aria-hidden="true">
                  <path d="M1 2.500h6L4 5.500z" fill="#222" />
                </svg>
              </span>
            </div>
            <span className="w-[3px]" />
            <Tools names={['sheet', '|', 'first', 'prev', 'back', 'stop', 'play', 'next', 'last', '|', 'refresh', '|', 'grid', 'check', '|', 'design', 'report', 'world', 'v']} />
            <span className="w-2" />
          </div>
        </div>
      </header>

      <div className="flex min-h-0 flex-1 border-t border-[#efede9]">
        <Sidebar />
        <SideTools />
        <main className="flex min-w-0 flex-1 flex-col border-r-[3px] border-[#e4e1dc]">
          <div className="flex h-[17px] shrink-0">
            <button className="flex w-[46px] items-center gap-[6px] border-r-2 border-[#55535a] pl-[3px] text-[#e23b2e]">
              <Glyph shapes={[['M1 3h10v6H1z', Y, '#665a2c'], ['M3 1v2M9 1v2M6 3v6M3 9v2M9 9v2', N, '#665a2c', 1.200]]} size={12} />
              入力
            </button>
          </div>
          <Drawing />
          <SlabPanel />
        </main>
      </div>
      <StatusBar />
    </div>
  )
}
